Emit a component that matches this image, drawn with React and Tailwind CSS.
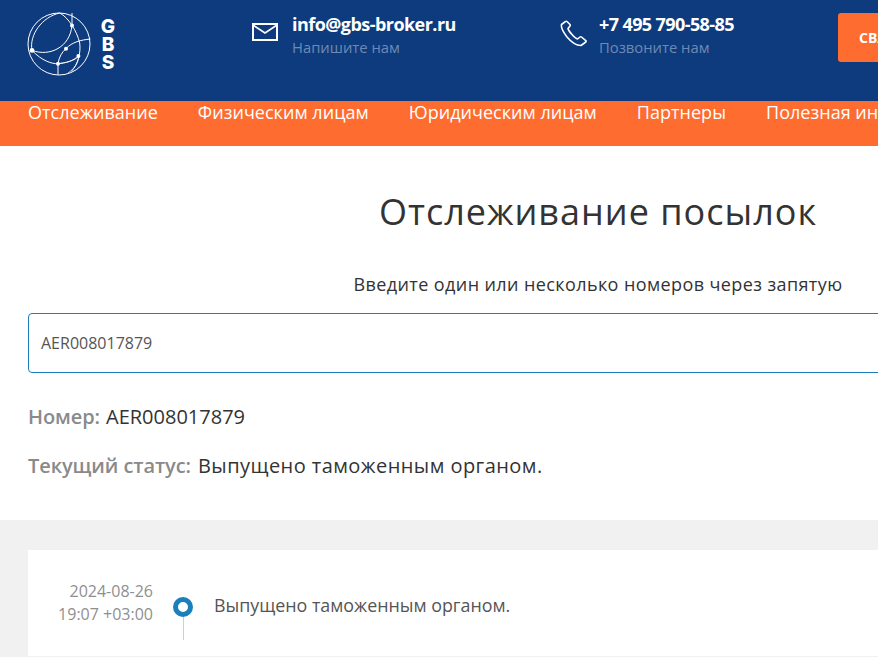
import React from "react";

const Logo = () => (
  <svg width="66" height="66" viewBox="0 0 66 66" fill="none" stroke="#fff" strokeWidth="1" className="shrink-0">
    <circle cx="33" cy="33" r="31" />
    <path d="M6 39.4 C 24 46 44 36 46 14.4 L 46 2" />
    <path d="M6 39.4 C 3 24 16 6 33.7 2 C 42 6 51 20 53.7 32 C 55 42 52 53 45.4 60.4" />
    <path d="M6 39.4 C 16 50 26 53 32 52.7 C 40 52 47 50 52.4 45" />
    <path d="M32 63.7 L 32 52.7 C 33 46 36 41 40 37.7 C 46 31 55 29 64.4 28" />
    <path d="M32 52.7 C 38 52 50 50 52.4 45 C 53 52 48 58 42 62" strokeWidth="0.7" />
    <g fill="#fff" stroke="none">
      <circle cx="46" cy="14.4" r="2" />
      <circle cx="6" cy="39.4" r="2.4" />
      <circle cx="40" cy="37.7" r="2" />
      <circle cx="52.4" cy="45" r="2" />
      <circle cx="32" cy="52.7" r="2" />
    </g>
  </svg>
);

const Mail = () => (
  <svg width="26" height="18" viewBox="0 0 26 18" fill="none" stroke="#fff" strokeWidth="2" className="shrink-0">
    <rect x="1" y="1" width="24" height="16" />
    <path d="M1 2 L13 10 L25 2" strokeWidth="1.6" />
  </svg>
);

const Phone = () => (
  <svg width="27" height="27" viewBox="0 0 27 27" fill="none" stroke="#fff" strokeWidth="1.6" strokeLinejoin="round" className="shrink-0">
    <path d="M5.5 1.5 L1.5 4.5 C0.8 7 2.5 11 7 17 C12 23 17 25.5 21 25.5 L25.8 22 C26.2 21.5 26.1 21 25.8 20.6 L21.5 17 C21 16.6 20.5 16.6 20 17 L17.5 19 C15 18.5 8.5 11 8 8.5 L10 6 C10.4 5.5 10.3 5 10 4.5 L7 1.5 C6.5 1.1 6 1.1 5.5 1.5 Z" />
  </svg>
);

const Contact = ({ icon, title, sub, iconClass, titleClass }) => (
  <div className="flex items-start">
    <div className={iconClass}>{icon}</div>
    <div className="flex flex-col">
      <span className={"text-[18px] leading-[24px] font-bold text-white " + titleClass}>{title}</span>
      <span className="text-[14.8px] leading-[22px] text-[#6d8ab5]">{sub}</span>
    </div>
  </div>
);

export default function App() {
  const nav = ["Отслеживание", "Физическим лицам", "Юридическим лицам", "Партнеры", "Полезная информация"];
  return (
    <div className="w-[878px] h-[657px] overflow-hidden bg-white" style={{ fontFamily: '"Open Sans", sans-serif' }}>
      <div className="w-[1196px]">
        <header className="h-[101px] bg-[#0d3b7e] pl-[26px] flex items-start">
          <div className="flex items-start w-[226px] pt-[11px]">
            <Logo />
            <span className="ml-[8px] mt-[7px] flex flex-col items-center text-white font-extrabold text-[19px] leading-[18px] w-[16px]" style={{ fontFamily: '"Inter", sans-serif' }}>
              <span>G</span><span>B</span><span>S</span>
            </span>
          </div>
          <div className="w-[308px] pt-[12px]">
            <Contact icon={<Mail />} iconClass="mt-[11px] mr-[14px]" titleClass="tracking-[-0.55px]" title="info@gbs-broker.ru" sub="Напишите нам" />
          </div>
          <div className="w-[278px] pt-[12px]">
            <Contact icon={<Phone />} iconClass="mt-[8px] mr-[12px]" titleClass="tracking-[-0.6px]" title="+7 495 790-58-85" sub="Позвоните нам" />
          </div>
          <button className="mt-[13px] h-[49px] w-[200px] rounded-[3px] bg-[#ff6c2f] text-white font-bold text-[14px] text-left pl-[21px]">
            СВЯЗАТЬСЯ С НАМИ
          </button>
        </header>
        <nav className="h-[45px] bg-[#ff6c2f] pl-[28px] flex gap-[40px] text-white text-[18px] leading-[22px] tracking-[0.03px] whitespace-nowrap">
          {nav.map((n) => (
            <span key={n}>{n}</span>
          ))}
        </nav>

        <main className="px-[28px]">
          <h1 className="mt-[42px] text-center text-[36px] leading-[48px] font-medium text-[#333] tracking-[1px]">
            Отслеживание посылок
          </h1>
          <p className="mt-[36px] text-center text-[18px] leading-[24px] font-medium text-[#333] tracking-[0.4px]">
            Введите один или несколько номеров через запятую
          </p>
          <div className="mt-[17px] h-[60px] rounded-[4px] border border-[#1b7fbd] flex items-center pl-[12px] text-[16px] text-[#555]">
            AER008017879
          </div>
          <div className="mt-[30px] text-[20px] leading-[28px] font-medium">
            <span className="font-semibold text-[#8a8a8a] tracking-[-0.08px]">Номер:</span>
            <span className="ml-[6px] text-[#333]">AER008017879</span>
          </div>
          <div className="mt-[21px] text-[20px] leading-[28px] font-medium">
            <span className="font-semibold text-[#8a8a8a] tracking-[-0.08px]">Текущий статус:</span>
            <span className="ml-[7px] text-[#333] tracking-[0.45px]">Выпущено таможенным органом.</span>
          </div>
        </main>

        <section className="mt-[40px] bg-[#f1f1f1] px-[28px] pt-[30px] pb-[40px]">
          <div className="bg-white h-[106px] flex items-start">
            <div className="w-[125px] pt-[30px] text-right text-[16px] leading-[23px] text-[#8f8f8f]">
              <div>2024-08-26</div>
              <div>19:07 +03:00</div>
            </div>
            <div className="w-[61px] flex flex-col pl-[20px] pt-[47px]">
              <div className="w-[20px] h-[20px] rounded-full border-[5px] border-[#1b7fbd] bg-white" />
              <div className="ml-[10px] w-px h-[23px] bg-[#cfcfcf]" />
            </div>
            <div className="pt-[43px] text-[17.85px] leading-[24px] text-[#555]">Выпущено таможенным органом.</div>
          </div>
        </section>
      </div>
    </div>
  );
}
